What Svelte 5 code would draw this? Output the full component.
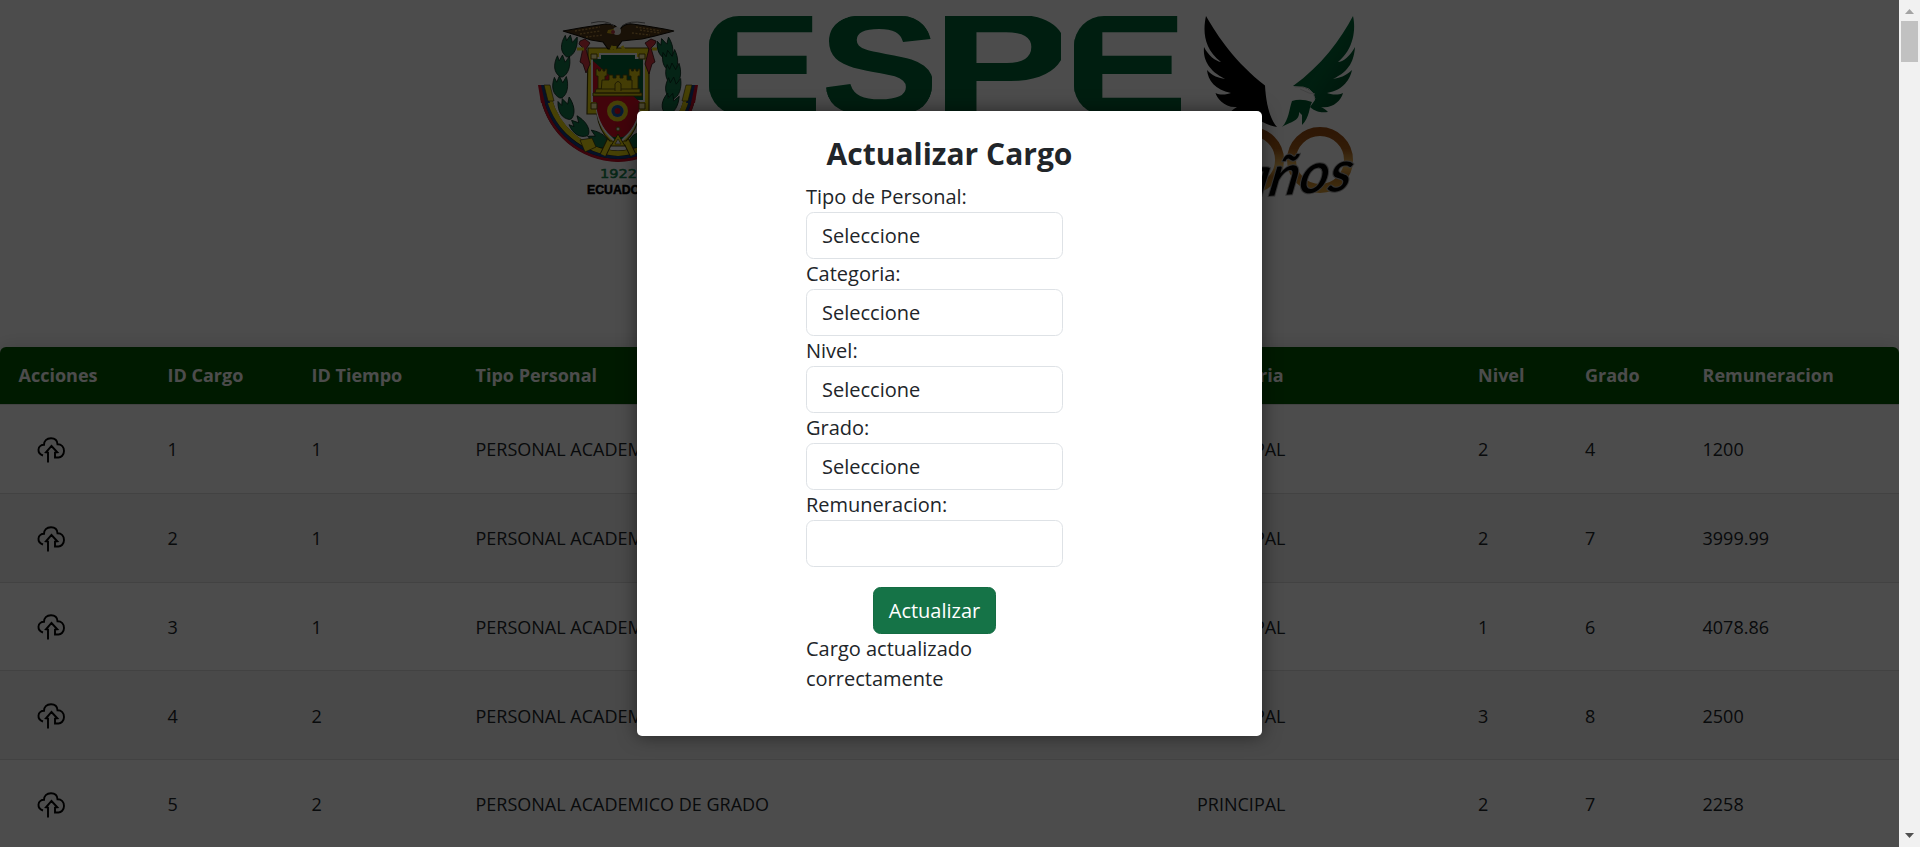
<script>
  const columns = ['Acciones', 'ID Cargo', 'ID Tiempo', 'Tipo Personal', 'Categoria', 'Nivel', 'Grado', 'Remuneracion'];
  const rows = [
    [1, 1, 'PERSONAL ACADEMICO DE GRADO', 'PRINCIPAL', 2, 4, '1200'],
    [2, 1, 'PERSONAL ACADEMICO DE GRADO', 'PRINCIPAL', 2, 7, '3999.99'],
    [3, 1, 'PERSONAL ACADEMICO DE GRADO', 'PRINCIPAL', 1, 6, '4078.86'],
    [4, 2, 'PERSONAL ACADEMICO DE GRADO', 'PRINCIPAL', 3, 8, '2500'],
    [5, 2, 'PERSONAL ACADEMICO DE GRADO', 'PRINCIPAL', 2, 7, '2258']
  ];
  const fields = ['Tipo de Personal:', 'Categoria:', 'Nivel:', 'Grado:'];
  const letters = [
    { c: 'E', x: 709, w: 106, ink: 0.067, span: 0.562 },
    { c: 'S', x: 826, w: 106, ink: 0.038, span: 0.588 },
    { c: 'P', x: 945, w: 116, ink: 0.067, span: 0.556 },
    { c: 'E', x: 1074, w: 106, ink: 0.067, span: 0.562 }
  ];
  const leftLeaves = [[569, 45, 8], [562, 65, 3], [560, 86, -4], [566, 108, -22], [579, 127, -48], [597, 140, -68]];
  const rightLeaves = [[665, 48, -20], [670, 60, -14], [673, 73, -6], [673, 87, 4], [670, 103, 16], [661, 122, 40], [640, 140, 66]];
</script>

{#snippet leaf(x, y, r)}
  <path transform="translate({x} {y}) rotate({r})" d="M-1 12C-8 8-9 0-5-9L-3-4 0-10 3-3 7-9C9 0 7 9 1 12Z" fill="#127a4c" stroke="#06281a" stroke-width=".8" />
{/snippet}

{#snippet tower(x)}
  <path d="M{x} 69h2.5v2h2v-2h2.5v2h2v-2h2v7h-2v13h-7V76h-2z" />
{/snippet}

<div class="screen">
  <div class="page">
    <header>
      <svg class="logo" viewBox="530 0 840 220" width="840" height="220">
        <defs>
          <linearGradient id="gold" x1="0" y1="0" x2="0" y2="1">
            <stop offset="0" stop-color="#9a4d12" /><stop offset=".3" stop-color="#a85d18" />
            <stop offset=".6" stop-color="#e9b85b" /><stop offset=".8" stop-color="#b87422" /><stop offset="1" stop-color="#d79a36" />
          </linearGradient>
          <linearGradient id="wingGreen" x1="0" y1="0" x2="1" y2="1">
            <stop offset="0" stop-color="#00522a" /><stop offset=".5" stop-color="#006837" /><stop offset="1" stop-color="#003f20" />
          </linearGradient>
          {#each letters as l, i}
            <clipPath id="edge{i}"><rect x={l.x} y="16" width={l.c === 'E' ? l.w + 50 : l.w} height="99" rx={l.c === 'P' ? 0 : 30} /></clipPath>
          {/each}
          <clipPath id="shieldClip"><path d="M596 57q0 4-4 4v43q4 0 4 5 0 18 17 28h10q17-10 17-28 0-5 4-5V61q-4 0-4-4z" /></clipPath>
        </defs>

        {#each leftLeaves as [x, y, r]}{@render leaf(x, y, r)}{/each}
        {#each rightLeaves as [x, y, r]}{@render leaf(x, y, r)}{/each}

        <g fill="none">
          <path d="M546 98C554 130 580 154 618 156 656 154 682 130 690 98" stroke="#1c1608" stroke-width="11" />
          <path d="M542 98C550 133 579 159 618 160.500 657 159 686 133 694 98" stroke="#c80d25" stroke-width="3" />
          <path d="M545 98C553 131 580 156 618 157.500 656 156 683 131 691 98" stroke="#153d83" stroke-width="3" />
          <path d="M549 98C557 128 583 152 618 153.500 653 152 679 128 687 98" stroke="#eedb13" stroke-width="5" />
        </g>
        <path d="M538 85h5l4 18h-6zm160 0h-5l-4 18h6z" fill="#c80d25" />
        <path d="M541 85h4l5 18h-5zm154 0h-4l-5 18h5z" fill="#153d83" />
        <path d="M544 85l4 16h6l-4-16zm148 0l-4 16h-6l4-16z" fill="#eedb13" stroke="#342c08" stroke-width=".6" />
        <path d="M580 140l12-2 4 9-11 5zm76 0l-12-2-4 9 11 5z" fill="#f0dc14" stroke="#342c08" stroke-width=".7" />
        <path d="M618 124l-15 31m15-31l15 31M610 142h16" stroke="#4c4105" stroke-width="7" />
        <path d="M618 124l-15 31m15-31l15 31M610 142h16" stroke="#f0dc14" stroke-width="5" />

        <path d="M588 48h61v66h-10q-2 17-13 27h-16q-11-10-13-27h-10z" fill="#eedb13" stroke="#4c4105" stroke-width="1.2" />
        <path d="M600 54h36v4h8v43h-5v9c-2 15-9 24-21 34-12-10-19-19-21-34v-9h-5V58h8z" fill="#006437" stroke="#fff" stroke-width="2" />
        <path clip-path="url(#shieldClip)" d="M593 61L640 102q-1 25-22 40-21-15-22-40h-3z" fill="#dc1026" />
        <path d="M591 54h6v5h-6zm48 0h6v5h-6zm-48 49h6v6h-6zm48 0h6v6h-6z" fill="#fff0a0" stroke="#615307" />
        <g fill="#e4cd13" stroke="#594c09" stroke-width=".9">
          {@render tower(596)}{@render tower(629)}
          <path d="M602 80h7v-5h4v3h3v-3h4v3h3v-3h4v5h5v13h-31z" />
          <path d="M596 89h44v4h-45zM593 93h49v3h-49z" />
          <path d="M615 91v-7q3-5 6 0v7" />
        </g>
        <circle cx="617.5" cy="111" r="8.5" fill="#b7b6a0" stroke="#ead619" stroke-width="4" />
        <circle cx="617.5" cy="111" r="6" fill="#1559a8" /><circle cx="617.5" cy="111" r="3" fill="#dc1026" />
        <circle cx="618" cy="129" r="2" fill="#ddd" stroke="#765e00" />
        <path d="M618 134l-7 12h14z" fill="#eedb13" stroke="#4c4105" /><path d="M618 139l-3 5h6z" fill="#eee" stroke="#4c4105" stroke-width=".6" />
        <g fill="#dc3b43" stroke="#3c1015" stroke-width=".8">
          <path d="M580 41l5-2 5 4-4 6 4 15-4 9-3-9-3-2 3-14-4-4zM656 41l-5-2-6 4 4 6-4 15 4 10 3-10 3-2-4-14 4-4z" />
        </g>
        <path d="M577 49h7m68 0h5" stroke="#eedb13" stroke-width="3" />
        <path d="M563 31q21-4 43-7 11 0 13 7 4-8 13-7 23 3 42 7l-19 5-13 3-11 1-9 1-6 8h-8l-5-7-12-2-12-4z" fill="#553b18" stroke="#120e07" stroke-width="1.1" />
        <path d="M575 31l25-4m-20 7l20-3m-14 6l17-2m33-8l25 4m-21-1l20 3m-28 0l18 2" stroke="#b58a43" stroke-width="1.3" stroke-dasharray="2 1.5" />
        <path d="M591 23q15-4 23 3m8 0q7-6 23-3" fill="none" stroke="#767676" />
        <circle cx="617" cy="31" r="4" fill="#ece8e2" /><path d="M614 29l-6 1-1 3 6 1z" fill="#d2ac18" /><circle cx="613" cy="32" r="2" fill="#b93845" />
        <path d="M613 46l-2 4m4-4v5m7-5l2 4" stroke="#eedb13" stroke-width="3" />

        <text class="year" x="600" y="178" textLength="37" lengthAdjust="spacingAndGlyphs">1922</text>
        <text class="country" x="587" y="194" textLength="62" lengthAdjust="spacingAndGlyphs">ECUADOR</text>

        {#each letters as l, i}
          {@const sx = l.w / (l.span * 144)}
          <g clip-path="url(#edge{i})">
            <text class="mark" transform="translate({l.x - l.ink * 144 * sx} 115) scale({sx} 1)">{l.c}</text>
          </g>
        {/each}

        <path d="M1206 16C1218 37 1236 63 1265 85.5 1266 104 1270 119 1277 127 1258 124 1248 109 1231 112 1230 112 1232 110 1237 107 1224 108 1217 98 1215.500 93 1221 96 1228 94 1231 93 1215 90 1208 80 1207 70 1212 76 1219 78 1225 79 1207 70 1203 58 1204 47 1208 55 1215 61 1221 62 1203 48 1203 30 1206 16Z" fill="#000" />
        <path d="M1353 16C1341 39 1321 66 1293 86L1302 87C1312 89 1315 95 1315 100L1310 107C1318 114 1324 112 1328 112 1325 109 1323 108 1321 107 1332 109 1341 101 1343 93 1337 96 1330 94 1327 93 1344 90 1350 79 1352 70 1346 76 1339 78 1333 79 1350 71 1354 60 1355 47 1350 56 1343 62 1338 62 1354 49 1356 29 1353 16Z" fill="url(#wingGreen)" />
        <path d="M1292 101Q1301 98 1312 102C1309 107 1310 117 1302 125L1302 115 1299 112C1300 121 1290 122 1282 127 1289 120 1289 109 1292 101Z" fill="#00602f" />
        <path d="M1295 87q18-2 20 12m-15-10l9 4 6 1" stroke="#ddd" fill="none" stroke-width="1" />

        <circle cx="1251" cy="160" r="28.500" fill="none" stroke="url(#gold)" stroke-width="9" />
        <circle cx="1320" cy="160" r="28.500" fill="none" stroke="url(#gold)" stroke-width="9" />
        <text class="anniversary" transform="translate(1238 198) rotate(-4) skewX(-14)" textLength="112" lengthAdjust="spacingAndGlyphs">años</text>
      </svg>
    </header>

    <div class="table">
      <div class="row head">
        {#each columns as column}<span>{column}</span>{/each}
      </div>
      {#each rows as row, i}
        <div class="row" class:even={i % 2 === 1}>
          <span class="action">
            <svg width="28" height="27" viewBox="0 0 28 27" fill="none" stroke="#000" stroke-width="1.9">
              <path d="M6 18.500C3 17.500 1.300 15 1.500 12.500 1.700 9.500 4.500 7.800 7 7.800 7 4 9.500 1.300 14 1.300 18.500 1.300 20.300 4 20.500 7.300 24.500 7.300 27 10 27 14 27 18 24 20.500 21.500 20.500H18V15.500L20.300 15.300 14.500 9 9 15.300 11 15.500V25.500" />
            </svg>
          </span>
          {#each row as cell}<span>{cell}</span>{/each}
        </div>
      {/each}
    </div>
  </div>

  <div class="overlay">
    <section class="modal">
      <h2>Actualizar Cargo</h2>
      <form onsubmit={(e) => e.preventDefault()}>
        {#each fields as field, i}
          <label for="field{i}">{field}</label>
          <select id="field{i}"><option>Seleccione</option></select>
        {/each}
        <label for="salary">Remuneracion:</label>
        <input id="salary" />
        <button>Actualizar</button>
        <p>Cargo actualizado correctamente</p>
      </form>
    </section>
  </div>

  <div class="scrollbar">
    <svg width="9" height="5"><path d="M4.500 0L9 5H0z" fill="#a3a3a3" /></svg>
    <div class="thumb"></div>
    <svg class="down" width="9" height="5"><path d="M0 0h9L4.500 5z" fill="#505050" /></svg>
  </div>
</div>

<style>
  :global(body) { margin: 0; overflow: hidden; }
  * { box-sizing: border-box; }
  .screen {
    position: relative;
    display: flex;
    width: 1920px;
    height: 847px;
    overflow: hidden;
    background: #fff;
    color: #212529;
    font-family: "Open Sans", sans-serif;
    font-size: 20px;
    line-height: 1.5;
  }
  .page { width: 1899px; height: 847px; overflow: hidden; }
  header { height: 347px; padding-left: 530px; }
  .logo { display: block; }
  .mark { font: 700 144px "Liberation Sans", sans-serif; fill: #006738; stroke: #006738; stroke-width: 2px; }
  .year { font: 400 12px "DejaVu Sans", sans-serif; fill: #16824e; stroke: #16824e; stroke-width: .5px; }
  .country { font: 700 13px "Liberation Sans", sans-serif; fill: #000; stroke: #000; stroke-width: .5px; }
  .anniversary { font: italic 500 56px "Lato", sans-serif; fill: #000; stroke: #aaa; stroke-width: 2px; paint-order: stroke; }

  .table {
    overflow: hidden;
    border-radius: 6px 6px 0 0;
    box-shadow: 0 0 20px rgba(0, 0, 0, .15);
    font-size: 18px;
    line-height: 27px;
  }
  .row {
    display: grid;
    grid-template-columns: 149px 144px 164px 721.500px 281px 107px 117.500px 1fr;
    align-items: center;
    height: 88.750px;
    padding: 2px 0 0 18.500px;
    border-bottom: 1px solid #ddd;
    background: #fff;
  }
  .row.even { background: #f3f3f3; }
  .row.head { height: 58px; padding-top: 0; background: #005700; background-clip: padding-box; color: #fff; font-weight: 700; }
  .action { padding: 1px 0 0 18.500px; }
  .action svg { display: block; }

  .overlay {
    position: absolute;
    inset: 0 21px 0 0;
    display: flex;
    align-items: center;
    justify-content: center;
    background: rgba(0, 0, 0, .7);
  }
  .modal {
    width: 625px;
    height: 625px;
    padding: 25px 20px 20px;
    border-radius: 5px;
    background: #fff;
    box-shadow: 0 0 18px rgba(0, 0, 0, .5);
  }
  h2 { margin: 0 0 10px; font-size: 30px; font-weight: 700; line-height: 36px; text-align: center; }
  form { display: flex; flex-direction: column; width: 257px; margin-left: 149px; }
  label { line-height: 30px; }
  select, input {
    appearance: none;
    width: 100%;
    height: 47px;
    padding: 7.500px 15px;
    border: 1px solid #dee2e6;
    border-radius: 7.500px;
    background: #fff;
    color: #212529;
    font: inherit;
  }
  button {
    align-self: center;
    height: 47px;
    margin-top: 20px;
    padding: 7.500px 15px;
    border: 1px solid #146c43;
    border-radius: 7.500px;
    background: #157347;
    color: #fff;
    font: inherit;
  }
  p { margin: 0; }

  .scrollbar { display: flex; flex-direction: column; align-items: center; width: 21px; padding: 9px 0; background: #f1f1f1; }
  .scrollbar svg { display: block; }
  .thumb { width: 17px; height: 41px; margin-top: 7px; background: #c1c1c1; }
  .down { margin-top: auto; }
</style>
